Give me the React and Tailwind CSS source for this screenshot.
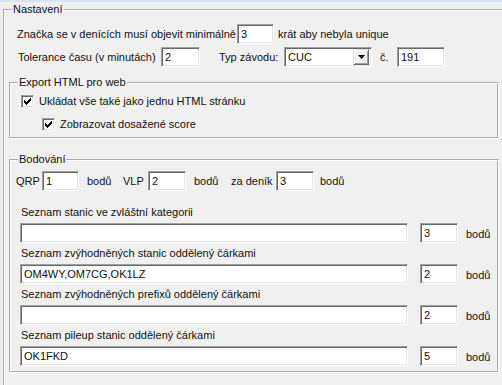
import React from 'react';

function Field({ value = '', className = '' }) {
  return (
    <div
      className={`h-[20px] shrink-0 bg-white border border-t-[#a0a0a0] border-l-[#a0a0a0] border-r-white border-b-white shadow-[inset_1px_1px_0_#696969,inset_-1px_-1px_0_#e3e3e3] pl-[3px] leading-[18px] whitespace-nowrap overflow-hidden ${className}`}
    >
      {value}
    </div>
  );
}

function Group({ title, className = '', children }) {
  return (
    <fieldset className={`border-2 border-white [border-style:groove] p-0 ${className}`}>
      <legend className="ml-[7px] px-[1px] leading-[13px]">{title}</legend>
      {children}
    </fieldset>
  );
}

function Check({ label, className = '' }) {
  return (
    <label className={`flex items-center gap-[5px] leading-[13px] ${className}`}>
      <span className="w-[13px] h-[13px] bg-white border border-t-[#a0a0a0] border-l-[#a0a0a0] border-r-white border-b-white shadow-[inset_1px_1px_0_#696969,inset_-1px_-1px_0_#e3e3e3] flex items-center justify-center">
        <svg width="7" height="7" viewBox="0 0 7 7">
          <path d="M0 2h1v1h1v1h1V3h1V2h1V1h1V0h1v3H6v1H5v1H4v1H3v1H2V6H1V5H0z" fill="#000" />
        </svg>
      </span>
      <span>{label}</span>
    </label>
  );
}

function Combo({ value }) {
  return (
    <div className="w-[88px] h-[20px] bg-white border border-t-[#a0a0a0] border-l-[#a0a0a0] border-r-white border-b-white shadow-[inset_1px_1px_0_#696969,inset_-1px_-1px_0_#e3e3e3] flex items-center justify-between pl-[3px] pr-[2px]">
      <span className="leading-[16px]">{value}</span>
      <span className="w-[16px] h-[16px] bg-[#f0f0f0] border border-t-[#e3e3e3] border-l-[#e3e3e3] border-r-[#696969] border-b-[#696969] shadow-[inset_1px_1px_0_#fff,inset_-1px_-1px_0_#a0a0a0] flex items-center justify-center">
        <svg width="7" height="4" viewBox="0 0 7 4">
          <path d="M0 0h7L3.5 4z" fill="#000" />
        </svg>
      </span>
    </div>
  );
}

function ListRow({ label, value, points }) {
  return (
    <div>
      <div className="leading-[13px] pl-[1px]">{label}</div>
      <div className="flex items-center mt-[4px]">
        <Field value={value} className="w-[388px]" />
        <Field value={points} className="w-[38px] ml-[12px]" />
        <span className="ml-[8px] mt-[3px]">bodů</span>
      </div>
    </div>
  );
}

export default function App() {
  return (
    <div className="w-[502px] h-[385px] overflow-hidden bg-[#f0f0f0] text-[11px] text-[#111] font-['Liberation_Sans',Arial,sans-serif]">
      <div className="h-[2px] bg-[#d9e4f1]" />
      <Group title="Nastavení" className="mt-[1px] ml-[3px] w-[540px] h-[420px]">
        {/* rows */}
        <div className="pl-[12px] pt-[8px]">
          <div className="flex items-center h-[20px]">
            <span className="w-[220px]">Značka se v denících musí objevit minimálně</span>
            <Field value="3" className="w-[37px]" />
            <span className="ml-[4px]">krát aby nebyla unique</span>
          </div>
          <div className="flex items-center h-[20px] mt-[3px] pl-[1px]">
            <span className="w-[143px]">Tolerance času (v minutách)</span>
            <Field value="2" className="w-[39px]" />
            <span className="ml-[19px] w-[65px]">Typ závodu:</span>
            <Combo value="CUC" />
            <span className="ml-[8px] w-[17px]">č.</span>
            <Field value="191" className="w-[48px]" />
          </div>
        </div>

        <Group title="Export HTML pro web" className="ml-[4px] mt-[9px] w-[490px]">
          <div className="pl-[10px] pt-[6px] pb-[6px]">
            <Check label="Ukládat vše také jako jednu HTML stránku" />
            <Check label="Zobrazovat dosažené score" className="mt-[10px] ml-[21px]" />
          </div>
        </Group>

        <Group title="Bodování" className="ml-[4px] mt-[14px] w-[490px]">
          <div className="flex items-center h-[20px] mt-[5px] pl-[5px]">
            <span className="w-[26px]">QRP</span>
            <Field value="1" className="w-[37px]" />
            <span className="ml-[8px] w-[36px]">bodů</span>
            <span className="w-[25px]">VLP</span>
            <Field value="2" className="w-[38px]" />
            <span className="ml-[8px] w-[37px]">bodů</span>
            <span className="w-[45px]">za deník</span>
            <Field value="3" className="w-[38px]" />
            <span className="ml-[6px]">bodů</span>
          </div>
          <div className="pl-[9px] mt-[15px] pb-[5px] flex flex-col gap-[4px]">
            <ListRow label="Seznam stanic ve zvláštní kategorii" value="" points="3" />
            <ListRow label="Seznam zvýhodněných stanic oddělený čárkami" value="OM4WY,OM7CG,OK1LZ" points="2" />
            <ListRow label="Seznam zvýhodněných prefixů oddělený čárkami" value="" points="2" />
            <ListRow label="Seznam pileup stanic oddělený čárkami" value="OK1FKD" points="5" />
          </div>
        </Group>
      </Group>
    </div>
  );
}
